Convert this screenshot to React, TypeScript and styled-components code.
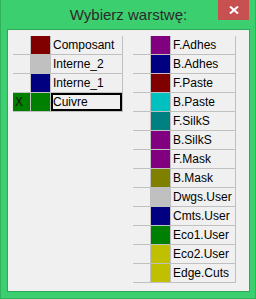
import React from 'react';
import styled, { createGlobalStyle } from 'styled-components';

const GlobalStyle = createGlobalStyle`
  html, body {
    margin: 0;
    padding: 0;
    background: #3ccf6f;
  }
  * {
    box-sizing: border-box;
  }
`;

type Layer = {
  name: string;
  color: string;
  active?: boolean;
};

const copperLayers: Layer[] = [
  { name: 'Composant', color: '#800000' },
  { name: 'Interne_2', color: '#c0c0c0' },
  { name: 'Interne_1', color: '#000080' },
  { name: 'Cuivre', color: '#008000', active: true },
];

const techLayers: Layer[] = [
  { name: 'F.Adhes', color: '#800080' },
  { name: 'B.Adhes', color: '#000080' },
  { name: 'F.Paste', color: '#800000' },
  { name: 'B.Paste', color: '#00c0c0' },
  { name: 'F.SilkS', color: '#008080' },
  { name: 'B.SilkS', color: '#800080' },
  { name: 'F.Mask', color: '#800080' },
  { name: 'B.Mask', color: '#808000' },
  { name: 'Dwgs.User', color: '#c0c0c0' },
  { name: 'Cmts.User', color: '#000080' },
  { name: 'Eco1.User', color: '#008000' },
  { name: 'Eco2.User', color: '#c0c000' },
  { name: 'Edge.Cuts', color: '#c0c000' },
];

const Frame = styled.div`
  width: 256px;
  height: 299px;
  display: flex;
  flex-direction: column;
  background: #3ccf6f;
  border: 1px solid #30b15d;
  border-top: none;
  padding: 0 5px 6px 6px;
  font-family: 'Liberation Sans', Arial, sans-serif;
`;

const TitleBar = styled.div`
  height: 29px;
  display: grid;
  grid-template-columns: 1fr auto 1fr;
  align-items: start;
  margin: 0 -5px 0 -6px;
`;

const Title = styled.div`
  grid-column: 2;
  height: 29px;
  line-height: 29px;
  font-size: 15px;
  color: #2b2b2b;
  white-space: nowrap;
  padding-left: 1px;
`;

const CloseButton = styled.div`
  grid-column: 3;
  justify-self: end;
  width: 31px;
  height: 20px;
  margin-right: 6px;
  background: #c75050;
  display: flex;
  align-items: center;
  justify-content: center;
`;

const Client = styled.div`
  flex: 1;
  border: 1px solid #2fa858;
  background: #f0f0f0;
  display: flex;
  align-items: flex-start;
  gap: 10px;
  padding: 6px 0 0 5px;
`;

const Table = styled.div`
  display: flex;
  flex-direction: column;
`;

const Row = styled.div<{ $textWidth: number }>`
  display: grid;
  grid-template-columns: 18px 20px ${(p) => p.$textWidth}px;
  height: 19px;
`;

const Cell = styled.div`
  border-right: 1px solid #c0c0c0;
  border-bottom: 1px solid #c0c0c0;
`;

const CheckCell = styled(Cell)<{ $bg?: string }>`
  background: ${(p) => p.$bg || 'transparent'};
  background-clip: padding-box;
  font-size: 12px;
  line-height: 18px;
  padding-left: 2px;
  color: #111;
`;

const Swatch = styled(Cell)<{ $color: string }>`
  background: ${(p) => p.$color};
  background-clip: padding-box;
`;

const NameCell = styled(Cell)<{ $selected?: boolean }>`
  font-size: 12px;
  line-height: 18px;
  padding: 1px 0 0 2px;
  line-height: 17px;
  color: #000;
  white-space: nowrap;
  overflow: hidden;
  box-shadow: ${(p) => (p.$selected ? 'inset 0 0 0 2px #000' : 'none')};
  background-clip: padding-box;
`;

function LayerTable({ layers, textWidth }: { layers: Layer[]; textWidth: number }) {
  return (
    <Table>
      {layers.map((layer) => (
        <Row key={layer.name} $textWidth={textWidth}>
          <CheckCell $bg={layer.active ? layer.color : undefined}>
            {layer.active ? 'X' : ''}
          </CheckCell>
          <Swatch $color={layer.color} />
          <NameCell $selected={layer.active}>{layer.name}</NameCell>
        </Row>
      ))}
    </Table>
  );
}

export default function App() {
  return (
    <>
      <GlobalStyle />
      <Frame>
        <TitleBar>
          <Title>Wybierz warstwę:</Title>
          <CloseButton>
            <svg width="10" height="8" viewBox="0 0 10 8">
              <path d="M1 0.5 L9 7.5 M9 0.5 L1 7.5" stroke="#fff" strokeWidth="2" />
            </svg>
          </CloseButton>
        </TitleBar>
        <Client>
          <LayerTable layers={copperLayers} textWidth={72} />
          <LayerTable layers={techLayers} textWidth={65} />
        </Client>
      </Frame>
    </>
  );
}
